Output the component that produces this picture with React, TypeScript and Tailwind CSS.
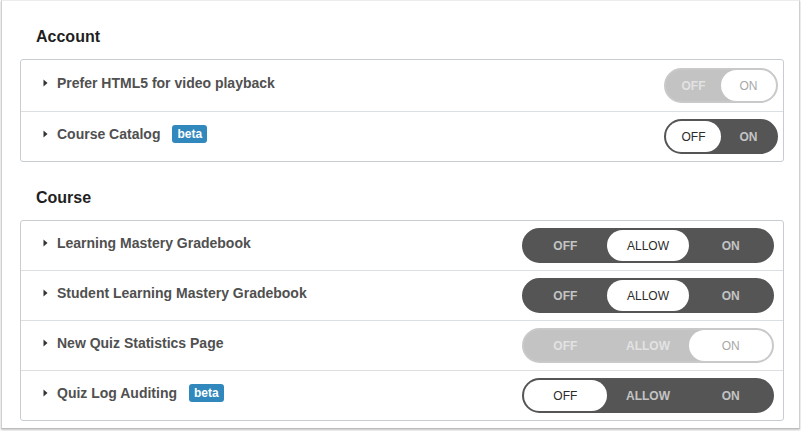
import React from "react";

interface ToggleProps {
  options: string[];
  selected: number;
  disabled?: boolean;
  width: string;
}

function Toggle({ options, selected, disabled, width }: ToggleProps) {
  const track = disabled
    ? "bg-[#c3c3c3] border-[#c9c9c9]"
    : "bg-[#555555] border-[#555555]";
  return (
    <div className={`flex h-[35px] ${width} rounded-full border-2 ${track}`}>
      {options.map((o, i) => {
        const on = i === selected;
        let cls = "";
        if (on) {
          cls = disabled
            ? "bg-white text-[#a8a8a8] font-normal"
            : "bg-white text-[#2b2b2b] font-normal";
        } else {
          cls = disabled ? "text-[#e2e2e2] font-bold" : "text-[#c4c4c4] font-bold";
        }
        return (
          <div
            key={o}
            className={`flex flex-1 items-center justify-center rounded-full text-[12px] ${cls}`}
          >
            {o}
          </div>
        );
      })}
    </div>
  );
}

function Caret() {
  return (
    <svg width="5" height="8" viewBox="0 0 5 8" className="shrink-0">
      <path d="M0.5 0.5 L4.5 4 L0.5 7.5 Z" fill="#333" />
    </svg>
  );
}

function Beta() {
  return (
    <span className="ml-3 inline-flex h-[18px] items-center rounded-[3px] bg-[#3088bd] px-[5px] text-[12px] font-bold text-white">
      beta
    </span>
  );
}

interface RowProps {
  label: string;
  beta?: boolean;
  h: string;
  first?: boolean;
  children: React.ReactNode;
}

function Row({ label, beta, h, first, children }: RowProps) {
  return (
    <div
      className={`flex ${h} items-center justify-between pl-[22px] pr-[5px] ${
        first ? "" : "border-t border-[#dcdfe2]"
      }`}
    >
      <div className="flex items-center pb-[5px]">
        <Caret />
        <span className="ml-[9px] text-[14px] font-bold text-[#505050]">{label}</span>
        {beta && <Beta />}
      </div>
      {children}
    </div>
  );
}

export default function App() {
  const two = ["OFF", "ON"];
  const tri = ["OFF", "ALLOW", "ON"];
  return (
    <div
      className="h-[431px] w-[801px] bg-white"
      style={{ fontFamily: '"Liberation Sans", Arial, sans-serif' }}
    >
      <div className="ml-px h-[429px] w-[799px] border-x border-b border-t border-x-[#cfcfcf] border-b-[#bdbdbd] border-t-[#ececec] pl-[18px] pr-[15px] pt-[26px] shadow-[0_1px_2px_rgba(0,0,0,0.25)]">
        <h2 className="mb-[12px] pl-[16px] text-[16px] font-bold leading-[20px] text-[#1f1f1f]">
          Account
        </h2>
        <div className="rounded-[3px] border border-[#c8cdd2]">
          <Row label="Prefer HTML5 for video playback" h="h-[51px]" first>
            <Toggle options={two} selected={1} disabled width="w-[114px]" />
          </Row>
          <Row label="Course Catalog" beta h="h-[50px]">
            <Toggle options={two} selected={0} width="w-[114px]" />
          </Row>
        </div>

        <h2 className="mb-[12px] mt-[26px] pl-[16px] text-[16px] font-bold leading-[20px] text-[#1f1f1f]">
          Course
        </h2>
        <div className="rounded-[3px] border border-[#c8cdd2]">
          <Row label="Learning Mastery Gradebook" h="h-[49px]" first>
            <div className="mr-[4px]">
              <Toggle options={tri} selected={1} width="w-[252px]" />
            </div>
          </Row>
          <Row label="Student Learning Mastery Gradebook" h="h-[50px]">
            <div className="mr-[4px]">
              <Toggle options={tri} selected={1} width="w-[252px]" />
            </div>
          </Row>
          <Row label="New Quiz Statistics Page" h="h-[50px]">
            <div className="mr-[4px]">
              <Toggle options={tri} selected={2} disabled width="w-[252px]" />
            </div>
          </Row>
          <Row label="Quiz Log Auditing" beta h="h-[50px]">
            <div className="mr-[4px]">
              <Toggle options={tri} selected={0} width="w-[252px]" />
            </div>
          </Row>
        </div>
      </div>
    </div>
  );
}
